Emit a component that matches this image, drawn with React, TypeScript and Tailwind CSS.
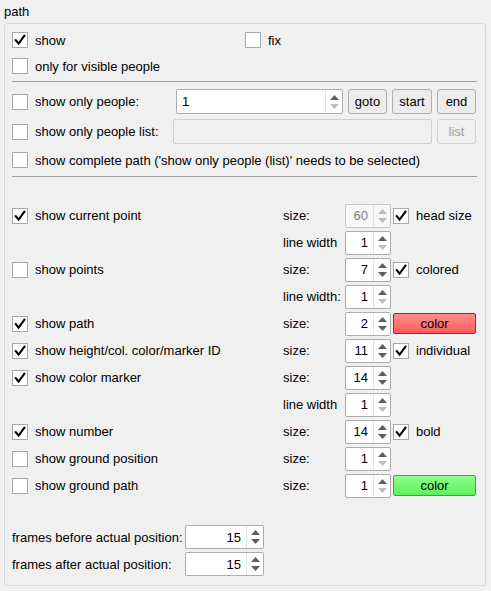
import React from 'react'

type SpinProps = {
  value: string
  w: string
  disabled?: boolean
  downOff?: boolean
  left?: boolean
}

function Arrow({ up, on }: { up: boolean; on: boolean }) {
  return (
    <svg width="9" height="5" viewBox="0 0 9 5" className="block">
      <polygon points={up ? '0,5 4.5,0 9,5' : '0,0 4.5,5 9,0'} fill={on ? '#5f5f5f' : '#bdbdbd'} />
    </svg>
  )
}

function Spin({ value, w, disabled, downOff, left }: SpinProps) {
  return (
    <div className={`${w} h-[24px] shrink-0 flex rounded-[2px] border ${disabled ? 'border-[#c8c8c8] bg-[#f7f7f7]' : 'border-[#adadad] bg-white'}`}>
      <div className={`flex-1 flex items-center px-[5px] ${left ? 'justify-start' : 'justify-end'} ${disabled ? 'text-[#838383]' : 'text-black'}`}>
        {value}
      </div>
      <div className="w-[17px] border-l border-[#e3e3e3] flex flex-col items-center justify-center gap-[4px]">
        <Arrow up on={!disabled} />
        <Arrow up={false} on={!disabled && !downOff} />
      </div>
    </div>
  )
}

function Check({ checked }: { checked?: boolean }) {
  return (
    <span className="w-4 h-4 shrink-0 bg-white border border-[#a9a9a9] flex items-center justify-center">
      {checked && (
        <svg width="12" height="12" viewBox="0 0 12 12">
          <path d="M1.8 6.2 L4.6 9.6 L10.4 1.8" fill="none" stroke="#000" strokeWidth="2.1" strokeLinecap="square" />
        </svg>
      )}
    </span>
  )
}

function CheckLabel({ checked, label }: { checked?: boolean; label: string }) {
  return (
    <div className="flex items-center gap-[7px]">
      <Check checked={checked} />
      <span>{label}</span>
    </div>
  )
}

function Button({ label, disabled, w }: { label: string; disabled?: boolean; w: string }) {
  return (
    <div className={`${w} h-[25px] shrink-0 rounded-[3px] border flex items-center justify-center ${disabled ? 'border-[#d2d2d2] bg-[#f0f0f0] text-[#a0a0a0]' : 'border-[#adadad] bg-[#ececec] text-black'}`}>
      {label}
    </div>
  )
}

type Row = {
  left?: { checked: boolean; label: string }
  sizeLabel: string
  value: string
  disabled?: boolean
  downOff?: boolean
  extra?: { kind: 'check'; label: string } | { kind: 'color'; tone: 'red' | 'green' }
}

const rows: Row[] = [
  { left: { checked: true, label: 'show current point' }, sizeLabel: 'size:', value: '60', disabled: true, extra: { kind: 'check', label: 'head size' } },
  { sizeLabel: 'line width', value: '1', downOff: true },
  { left: { checked: false, label: 'show points' }, sizeLabel: 'size:', value: '7', extra: { kind: 'check', label: 'colored' } },
  { sizeLabel: 'line width:', value: '1', downOff: true },
  { left: { checked: true, label: 'show path' }, sizeLabel: 'size:', value: '2', extra: { kind: 'color', tone: 'red' } },
  { left: { checked: true, label: 'show height/col. color/marker ID' }, sizeLabel: 'size:', value: '11', extra: { kind: 'check', label: 'individual' } },
  { left: { checked: true, label: 'show color marker' }, sizeLabel: 'size:', value: '14' },
  { sizeLabel: 'line width', value: '1', downOff: true },
  { left: { checked: true, label: 'show number' }, sizeLabel: 'size:', value: '14', extra: { kind: 'check', label: 'bold' } },
  { left: { checked: false, label: 'show ground position' }, sizeLabel: 'size:', value: '1', downOff: true },
  { left: { checked: false, label: 'show ground path' }, sizeLabel: 'size:', value: '1', downOff: true, extra: { kind: 'color', tone: 'green' } },
]

export default function App() {
  return (
    <div className="w-[491px] h-[591px] bg-[#f0f0f0] text-black text-[13px] leading-none font-['Liberation_Sans',Arial,sans-serif] overflow-hidden">
      {/* title */}
      <div className="h-[23px] pl-[4px] flex items-center">path</div>

      {/* group box */}
      <div className="mx-[4px] w-[482px] h-[563px] border border-[#d9d9d9] rounded-[3px] pl-[7px] pr-[8px] pt-[4px]">
        <div className="h-[24px] flex items-center">
          <div className="w-[233px]">
            <CheckLabel checked label="show" />
          </div>
          <CheckLabel label="fix" />
        </div>
        <div className="mt-[2px] h-[24px] flex items-center">
          <CheckLabel label="only for visible people" />
        </div>

        <div className="mt-[3px] h-px bg-[#a0a0a0]" />

        <div className="mt-[7px] h-[25px] flex items-center">
          <div className="w-[164px]">
            <CheckLabel label="show only people:" />
          </div>
          <div className="w-[167px] h-[25px] shrink-0 flex rounded-[2px] border border-[#adadad] bg-white">
            <div className="flex-1 flex items-center px-[5px]">1</div>
            <div className="w-[17px] border-l border-[#e3e3e3] flex flex-col items-center justify-center gap-[4px]">
              <Arrow up on />
              <Arrow up={false} on={false} />
            </div>
          </div>
          <div className="ml-[5px] flex gap-[5px]">
            <Button label="goto" w="w-[39px]" />
            <Button label="start" w="w-[40px]" />
            <Button label="end" w="w-[39px]" />
          </div>
        </div>

        <div className="mt-[5px] h-[25px] flex items-center">
          <div className="w-[161px]">
            <CheckLabel label="show only people list:" />
          </div>
          <div className="w-[259px] h-[25px] rounded-[2px] border border-[#cfcfcf] bg-[#f0f0f0]" />
          <div className="ml-[5px]">
            <Button label="list" disabled w="w-[39px]" />
          </div>
        </div>

        <div className="mt-[4px] h-[24px] flex items-center">
          <CheckLabel label="show complete path ('show only people (list)' needs to be selected)" />
        </div>

        <div className="mt-[4px] h-px bg-[#a0a0a0]" />

        {/* drawing options */}
        <div className="mt-[25px] flex flex-col">
          {rows.map((r, i) => (
            <div key={i} className="h-[27px] flex items-center">
              <div className="w-[271px]">{r.left && <CheckLabel checked={r.left.checked} label={r.left.label} />}</div>
              <div className="w-[62px]">{r.sizeLabel}</div>
              <Spin value={r.value} w="w-[46px]" disabled={r.disabled} downOff={r.downOff} />
              <div className="ml-[2px]">
                {r.extra?.kind === 'check' && <CheckLabel checked label={r.extra.label} />}
                {r.extra?.kind === 'color' && (
                  <div
                    className={`w-[83px] h-[21px] rounded-[2px] border flex items-center justify-center ${
                      r.extra.tone === 'red'
                        ? 'border-[#c01818] bg-gradient-to-b from-[#ff8c8c] to-[#ff5a5a]'
                        : 'border-[#30b030] bg-gradient-to-b from-[#8cff8c] to-[#5ef05e]'
                    }`}
                  >
                    color
                  </div>
                )}
              </div>
            </div>
          ))}
        </div>

        {/* frames */}
        <div className="mt-[26px] h-[24px] flex items-center">
          <div className="w-[173px]">frames before actual position:</div>
          <Spin value="15" w="w-[79px]" />
        </div>
        <div className="mt-[3px] h-[24px] flex items-center">
          <div className="w-[173px]">frames after actual position:</div>
          <Spin value="15" w="w-[79px]" />
        </div>
      </div>
    </div>
  )
}
